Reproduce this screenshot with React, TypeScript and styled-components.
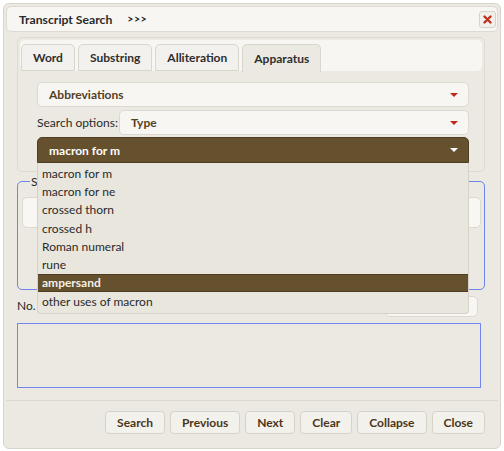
import React from "react";
import styled, { createGlobalStyle } from "styled-components";

const Global = createGlobalStyle`
  html, body { margin: 0; padding: 0; background: #ffffff; }
  body { font-family: Lato, "Open Sans", sans-serif; font-size: 12px; color: #2e2e2e; }
  * { box-sizing: border-box; }
`;

const Dialog = styled.div`
  margin: 3px;
  width: 498px;
  height: 446px;
  border: 1px solid #d8d5cc;
  border-radius: 6px;
  background: #ebe9e1;
  padding: 2px;
  display: flex;
  flex-direction: column;
`;

const TitleBar = styled.div`
  height: 26px;
  border: 1px solid #dddad1;
  border-radius: 5px;
  background: #f7f6f3;
  display: flex;
  align-items: center;
  padding: 0 1px 0 12px;
`;

const Title = styled.span`
  font-weight: 700;
  font-size: 12.2px;
  color: #2a2a2a;
`;

const Arrows = styled.span`
  font-weight: 700;
  font-size: 10.5px;
  margin-left: 15px;
  letter-spacing: 0.5px;
  color: #2a2a2a;
`;

const CloseButton = styled.button`
  margin-left: auto;
  width: 17px;
  height: 17px;
  padding: 0;
  border: 1px solid #d6d2c8;
  border-radius: 3px;
  background: #f2f0eb;
  display: flex;
  align-items: center;
  justify-content: center;
`;

const Content = styled.div`
  flex: 1;
  padding: 5px 13px 0 11px;
  display: flex;
  flex-direction: column;
`;

const Tabs = styled.div`
  position: relative;
  z-index: 2;
  border: 1px solid #dedbd2;
  border-radius: 5px;
  padding: 2px;
  background: #ebe9e1;
`;

const TabNav = styled.div`
  height: 31px;
  background: #f7f6f3;
  border-radius: 5px;
  display: flex;
  align-items: flex-end;
  gap: 3px;
  padding: 0 0 0 1px;
`;

const Tab = styled.div<{ $active?: boolean }>`
  height: ${(p) => (p.$active ? "28px" : "27px")};
  margin-bottom: ${(p) => (p.$active ? "-1px" : "0")};
  padding: 0 11px;
  display: flex;
  align-items: center;
  font-weight: 700;
  font-size: 12px;
  color: #2e2e2e;
  border: 1px solid #d9d6cd;
  border-bottom: ${(p) => (p.$active ? "none" : "1px solid #d9d6cd")};
  border-radius: 5px 5px 0 0;
  background: ${(p) => (p.$active ? "#ebe9e1" : "#f2f1ed")};
`;

const TabPanel = styled.div`
  padding: 11px 13px 6px 17px;
  display: flex;
  flex-direction: column;
`;

const Select = styled.div<{ $active?: boolean }>`
  flex: 1 1 auto;
  height: ${(p) => (p.$active ? "26px" : "25px")};
  border: 1px solid ${(p) => (p.$active ? "#4e3d22" : "#dcd9d0")};
  border-radius: ${(p) => (p.$active ? "5px 5px 0 0" : "5px")};
  background: ${(p) => (p.$active ? "#66512f" : "#f7f6f3")};
  color: ${(p) => (p.$active ? "#ffffff" : "#54401f")};
  font-weight: 700;
  font-size: 12px;
  display: flex;
  align-items: center;
  padding: 0 10px 0 11px;
`;

const SelectText = styled.span`
  flex: 1;
`;

const Caret = styled.span<{ $light?: boolean }>`
  width: 0;
  height: 0;
  border-left: 4px solid transparent;
  border-right: 4px solid transparent;
  border-top: 4px solid ${(p) => (p.$light ? "#ffffff" : "#c0281c")};
`;

const OptionRow = styled.div`
  display: flex;
  align-items: center;
  gap: 1px;
  margin-top: 3px;
`;

const Label = styled.span`
  font-size: 12px;
  color: #2a2a2a;
`;

const DropWrap = styled.div`
  position: relative;
  display: flex;
  margin-top: 2px;
`;

const Menu = styled.ul`
  position: absolute;
  left: 0;
  right: 0;
  top: 100%;
  margin: 0;
  padding: 1px 0 3px;
  list-style: none;
  background: #e9e6de;
  border: 1px solid #d6d2c9;
  border-top: none;
  border-radius: 0 0 4px 4px;
  z-index: 10;
`;

const MenuItem = styled.li<{ $hl?: boolean }>`
  height: 18.3px;
  display: flex;
  align-items: center;
  padding: 0 4px;
  font-size: 12px;
  font-weight: ${(p) => (p.$hl ? 700 : 400)};
  color: ${(p) => (p.$hl ? "#f4efe6" : "#2a2a2a")};
  background: ${(p) => (p.$hl ? "#66512f" : "transparent")};
  border-top: ${(p) => (p.$hl ? "1px solid #4e3d22" : "none")};
  border-bottom: ${(p) => (p.$hl ? "1px solid #4e3d22" : "none")};
`;

const Fieldset = styled.fieldset`
  margin: 2px 0 0 0;
  height: 116px;
  border: 1px solid #6e84ee;
  border-radius: 5px;
  padding: 8px 3px 0 4px;
`;

const Legend = styled.legend`
  padding: 0 1px;
  margin-left: 8px;
  font-size: 12px;
  color: #2a2a2a;
`;

const TextInput = styled.div`
  height: 31px;
  border: 1px solid #dcd9d0;
  border-radius: 5px;
  background: #f8f7f4;
`;

const NoRow = styled.div`
  display: flex;
  align-items: flex-end;
  height: 27px;
`;

const NoLabel = styled.span`
  font-size: 12px;
  color: #2a2a2a;
  margin-bottom: 4px;
`;

const SmallInput = styled.div`
  margin-left: auto;
  margin-right: 7px;
  width: 93px;
  height: 21px;
  border: 1px solid #dcd9d0;
  border-radius: 5px;
  background: #f7f6f3;
`;

const ResultBox = styled.div`
  margin-top: 6px;
  width: 464px;
  height: 65px;
  border: 1px solid #7186ef;
  background: #ebe9e1;
`;

const ButtonPane = styled.div`
  border-top: 1px solid #dcd9d0;
  padding: 10px 13px 12px;
  display: flex;
  justify-content: flex-end;
  gap: 5px;
`;

const Button = styled.button`
  height: 23px;
  padding: 0 11px;
  border: 1px solid #d6d2c8;
  border-radius: 4px;
  background: #f2f1ec;
  font-family: Lato, "Open Sans", sans-serif;
  font-weight: 700;
  font-size: 12px;
  color: #4b361a;
`;

const tabs = ["Word", "Substring", "Alliteration", "Apparatus"];
const items = [
  "macron for m",
  "macron for ne",
  "crossed thorn",
  "crossed h",
  "Roman numeral",
  "rune",
  "ampersand",
  "other uses of macron",
];
const buttons = ["Search", "Previous", "Next", "Clear", "Collapse", "Close"];

export default function App() {
  return (
    <>
      <Global />
      <Dialog>
        <TitleBar>
          <Title>Transcript Search</Title>
          <Arrows>&gt;&gt;&gt;</Arrows>
          <CloseButton aria-label="close">
            <svg width="9" height="9" viewBox="0 0 9 9">
              <path d="M1.5 1.5 L7.5 7.5 M7.5 1.5 L1.5 7.5" stroke="#c0321f" strokeWidth="2.4" strokeLinecap="round" />
            </svg>
          </CloseButton>
        </TitleBar>
        <Content>
          <Tabs>
            <TabNav>
              {tabs.map((t) => (
                <Tab key={t} $active={t === "Apparatus"}>
                  {t}
                </Tab>
              ))}
            </TabNav>
            <TabPanel>
              <Select>
                <SelectText>Abbreviations</SelectText>
                <Caret />
              </Select>
              <OptionRow>
                <Label>Search options:</Label>
                <Select>
                  <SelectText>Type</SelectText>
                  <Caret />
                </Select>
              </OptionRow>
              <DropWrap>
                <Select $active>
                  <SelectText>macron for m</SelectText>
                  <Caret $light />
                </Select>
                <Menu>
                  {items.map((it) => (
                    <MenuItem key={it} $hl={it === "ampersand"}>
                      {it}
                    </MenuItem>
                  ))}
                </Menu>
              </DropWrap>
            </TabPanel>
          </Tabs>
          <Fieldset>
            <Legend>Search</Legend>
            <TextInput />
          </Fieldset>
          <NoRow>
            <NoLabel>No.</NoLabel>
            <SmallInput />
          </NoRow>
          <ResultBox />
        </Content>
        <ButtonPane>
          {buttons.map((b) => (
            <Button key={b}>{b}</Button>
          ))}
        </ButtonPane>
      </Dialog>
    </>
  );
}
